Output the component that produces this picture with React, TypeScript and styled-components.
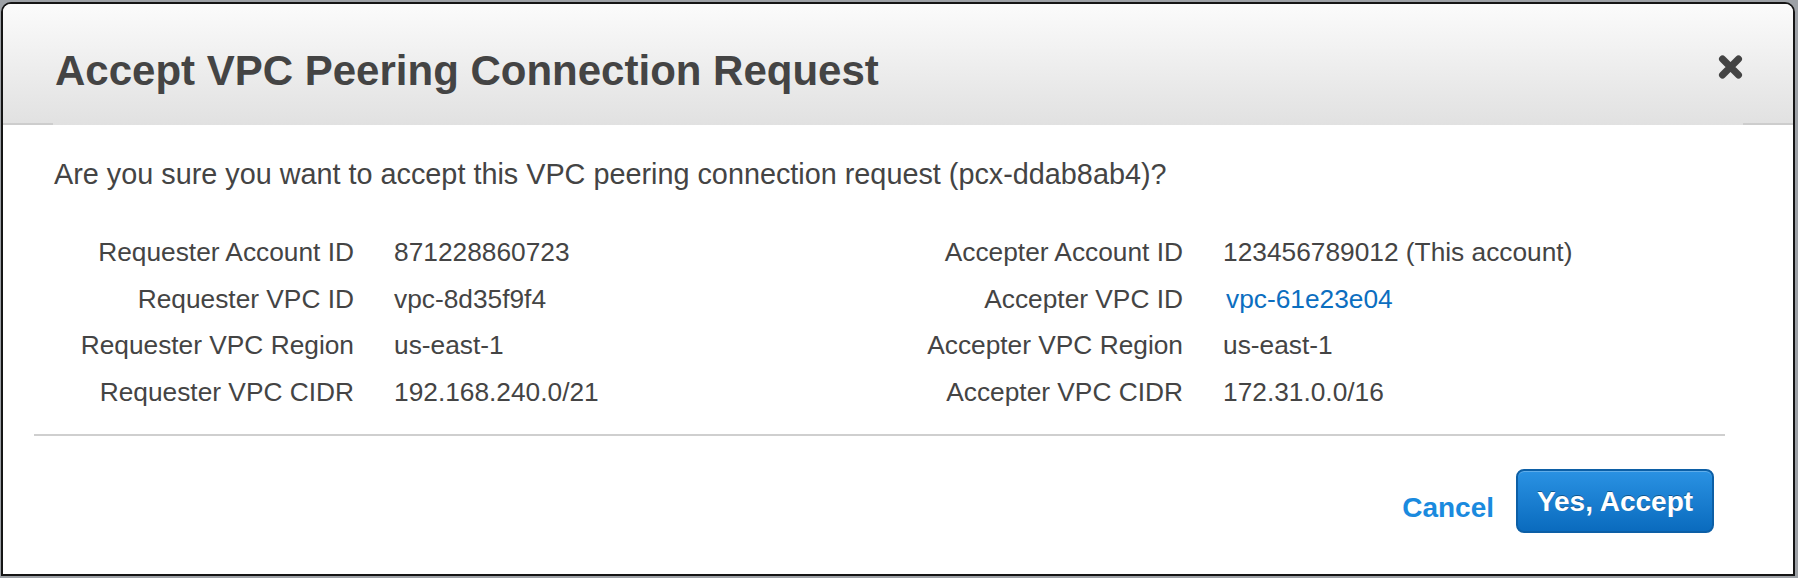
import React from "react";
import styled, { createGlobalStyle } from "styled-components";

const GlobalStyle = createGlobalStyle`
  html, body {
    margin: 0;
    padding: 0;
    background: #9da1a6;
  }
  body {
    font-family: "Liberation Sans", Arial, Helvetica, sans-serif;
    color: #444;
  }
  * {
    box-sizing: border-box;
  }
`;

const Dialog = styled.div`
  margin: 2px 3px 2px 1px;
  height: 574px;
  border: 2px solid #151515;
  border-radius: 10px 10px 0 0;
  background: #fff;
  overflow: hidden;
  display: flex;
  flex-direction: column;
`;

const Header = styled.div`
  flex: none;
  height: 121px;
  display: flex;
  align-items: center;
  justify-content: space-between;
  padding: 12px 50px 0 52px;
  background:
    linear-gradient(
        to right,
        #cdcdcd 50px,
        transparent 50px,
        transparent calc(100% - 50px),
        #cdcdcd calc(100% - 50px)
      )
      left bottom / 100% 2px no-repeat,
    linear-gradient(#fbfbfb, #e1e1e1);
`;

const Title = styled.h1`
  margin: 0;
  font-size: 42px;
  line-height: 42px;
  font-weight: bold;
  color: #444;
`;

const CloseButton = styled.button`
  margin: 0 0 7px;
  padding: 0;
  border: none;
  background: transparent;
  color: #444;
  width: 25px;
  height: 24px;
  display: flex;
  cursor: pointer;
`;

const Body = styled.div`
  flex: 1;
  display: flex;
  flex-direction: column;
  padding: 0 68px 0 31px;
`;

const Content = styled.div`
  padding: 32px 0 0 20px;
`;

const Question = styled.p`
  margin: 0;
  font-size: 28.8px;
  line-height: 35px;
  color: #444;
`;

const Details = styled.div`
  display: grid;
  grid-template-columns: 829px 1fr;
  margin-top: 37px;
`;

const Fields = styled.dl`
  display: grid;
  grid-template-columns: 300px 1fr;
  column-gap: 40px;
  margin: 0;
  font-size: 26.3px;
  line-height: 46.5px;
`;

const Label = styled.dt`
  margin: 0;
  text-align: right;
  color: #444;
  white-space: nowrap;
`;

const Value = styled.dd<{ $link?: boolean }>`
  margin: 0;
  white-space: nowrap;
  color: ${({ $link }) => ($link ? "#0b6ec0" : "#444")};
  padding-left: ${({ $link }) => ($link ? "3px" : "0")};
`;

const Divider = styled.hr`
  border: 0;
  height: 2px;
  margin: 19px 0 0;
  background: #cfcfcf;
`;

const Footer = styled.div`
  display: flex;
  justify-content: flex-end;
  align-items: center;
  gap: 22px;
  padding: 33px 11px 0 0;
`;

const CancelLink = styled.a`
  margin-top: 13px;
  font-size: 28px;
  line-height: 32px;
  font-weight: bold;
  color: #1a8ade;
  text-decoration: none;
  cursor: pointer;
`;

const AcceptButton = styled.button`
  width: 198px;
  height: 64px;
  padding: 2px 0 0;
  border: 2px solid #0c5fa6;
  border-radius: 8px;
  background: linear-gradient(#2a92e3, #0a6bbe);
  box-shadow: inset 0 1px 0 rgba(255, 255, 255, 0.25);
  color: #fff;
  font-family: inherit;
  font-size: 28px;
  line-height: 32px;
  font-weight: bold;
  text-shadow: 0 -1px 0 rgba(0, 0, 0, 0.35);
  cursor: pointer;
`;

type Field = { label: string; value: string; link?: boolean };

const requester: Field[] = [
  { label: "Requester Account ID", value: "871228860723" },
  { label: "Requester VPC ID", value: "vpc-8d35f9f4" },
  { label: "Requester VPC Region", value: "us-east-1" },
  { label: "Requester VPC CIDR", value: "192.168.240.0/21" },
];

const accepter: Field[] = [
  { label: "Accepter Account ID", value: "123456789012 (This account)" },
  { label: "Accepter VPC ID", value: "vpc-61e23e04", link: true },
  { label: "Accepter VPC Region", value: "us-east-1" },
  { label: "Accepter VPC CIDR", value: "172.31.0.0/16" },
];

const FieldList = ({ fields }: { fields: Field[] }) => (
  <Fields>
    {fields.map((f) => (
      <React.Fragment key={f.label}>
        <Label>{f.label}</Label>
        <Value $link={f.link}>{f.value}</Value>
      </React.Fragment>
    ))}
  </Fields>
);

const App = () => (
  <>
    <GlobalStyle />
    <Dialog role="dialog">
      <Header>
        <Title>Accept VPC Peering Connection Request</Title>
        <CloseButton aria-label="Close">
          <svg width="25" height="24" viewBox="0 0 25 24" aria-hidden="true">
            <path
              d="M4.5 4 L20.5 20 M20.5 4 L4.5 20"
              stroke="currentColor"
              strokeWidth="7"
              strokeLinecap="round"
            />
          </svg>
        </CloseButton>
      </Header>
      <Body>
        <Content>
          <Question>
            Are you sure you want to accept this VPC peering connection request
            (pcx-ddab8ab4)?
          </Question>
          <Details>
            <FieldList fields={requester} />
            <FieldList fields={accepter} />
          </Details>
        </Content>
        <Divider />
        <Footer>
          <CancelLink>Cancel</CancelLink>
          <AcceptButton>Yes, Accept</AcceptButton>
        </Footer>
      </Body>
    </Dialog>
  </>
);

export default App;
